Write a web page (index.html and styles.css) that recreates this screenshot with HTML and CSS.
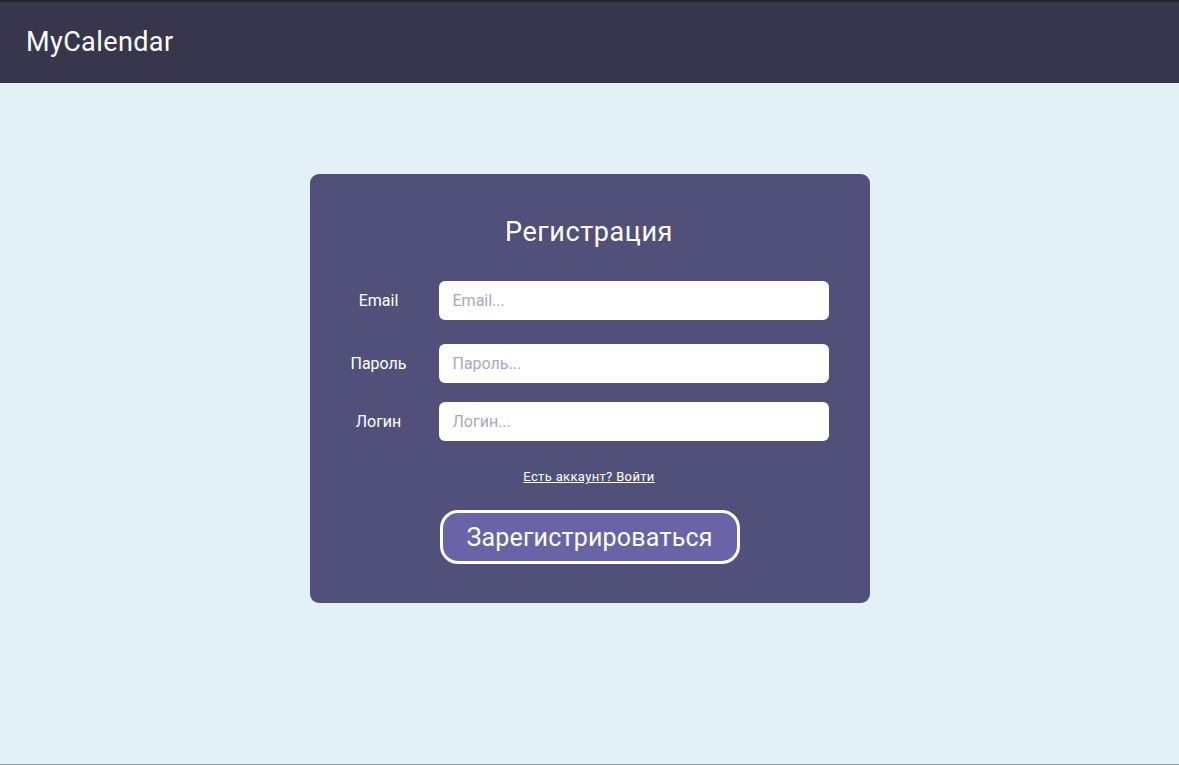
FILE: index.html
```html
<!DOCTYPE html>
<html lang="ru">
<head>
<meta charset="utf-8">
<title>MyCalendar</title>
<link rel="stylesheet" href="styles.css">
</head>
<body>
<header class="topbar">
  <div class="logo">MyCalendar</div>
</header>
<main class="main">
  <form class="card">
    <h1 class="title">Регистрация</h1>
    <div class="row row-email">
      <label class="label">Email</label>
      <input class="input" type="text" placeholder="Email...">
    </div>
    <div class="row row-pass">
      <label class="label">Пароль</label>
      <input class="input" type="password" placeholder="Пароль...">
    </div>
    <div class="row row-login">
      <label class="label">Логин</label>
      <input class="input" type="text" placeholder="Логин...">
    </div>
    <a class="link" href="#">Есть аккаунт? Войти</a>
    <button class="btn" type="button">Зарегистрироваться</button>
  </form>
</main>
</body>
</html>
```

FILE: styles.css
```css
* { box-sizing: border-box; }
html, body { margin: 0; height: 100%; }
body {
  font-family: "Roboto", "DejaVu Sans", sans-serif;
  background: #e3f1f6;
  border-top: 2px solid #232327;
  border-bottom: 1px solid #8f9c9e;
  display: flex;
  flex-direction: column;
}
.topbar {
  height: 81px;
  background: #37364d;
  display: flex;
  align-items: center;
  padding-left: 26px;
  flex-shrink: 0;
}
.logo {
  color: #fff;
  font-size: 27px;
  letter-spacing: 0.4px;
  margin-top: -2px;
}
.main {
  flex: 1;
  display: flex;
  justify-content: center;
  align-items: flex-start;
  padding-top: 91px;
}
.card {
  width: 560px;
  background: #51507a;
  border-radius: 9px;
  padding: 42px 41px 39px 30px;
  display: flex;
  flex-direction: column;
  align-items: center;
}
.title {
  margin: 0 0 33px 10px;
  font-weight: 400;
  font-size: 27px;
  letter-spacing: 0.6px;
  color: #fff;
}
.row {
  width: 100%;
  display: flex;
  align-items: center;
}
.row-pass { margin-top: 24px; }
.row-login { margin-top: 19px; }
.label {
  width: 78px;
  margin-right: 21px;
  text-align: center;
  color: #fff;
  font-size: 16px;
}
.input {
  flex: 1;
  height: 39px;
  border: none;
  border-radius: 6px;
  background: #fff;
  padding: 0 14px;
  font-family: inherit;
  font-size: 16px;
  color: #333;
  outline: none;
}
.input::placeholder { color: #a9a8bf; }
.link {
  margin: 28px 0 0 10px;
  color: #fff;
  font-size: 13px;
  letter-spacing: 0.35px;
  text-decoration: underline;
}
.btn {
  margin: 26px 0 0 11px;
  width: 300px;
  height: 54px;
  border: 3px solid #fff;
  border-radius: 18px;
  background: #6964a8;
  color: #fff;
  font-family: inherit;
  font-size: 25px;
  letter-spacing: 0.2px;
}
```
